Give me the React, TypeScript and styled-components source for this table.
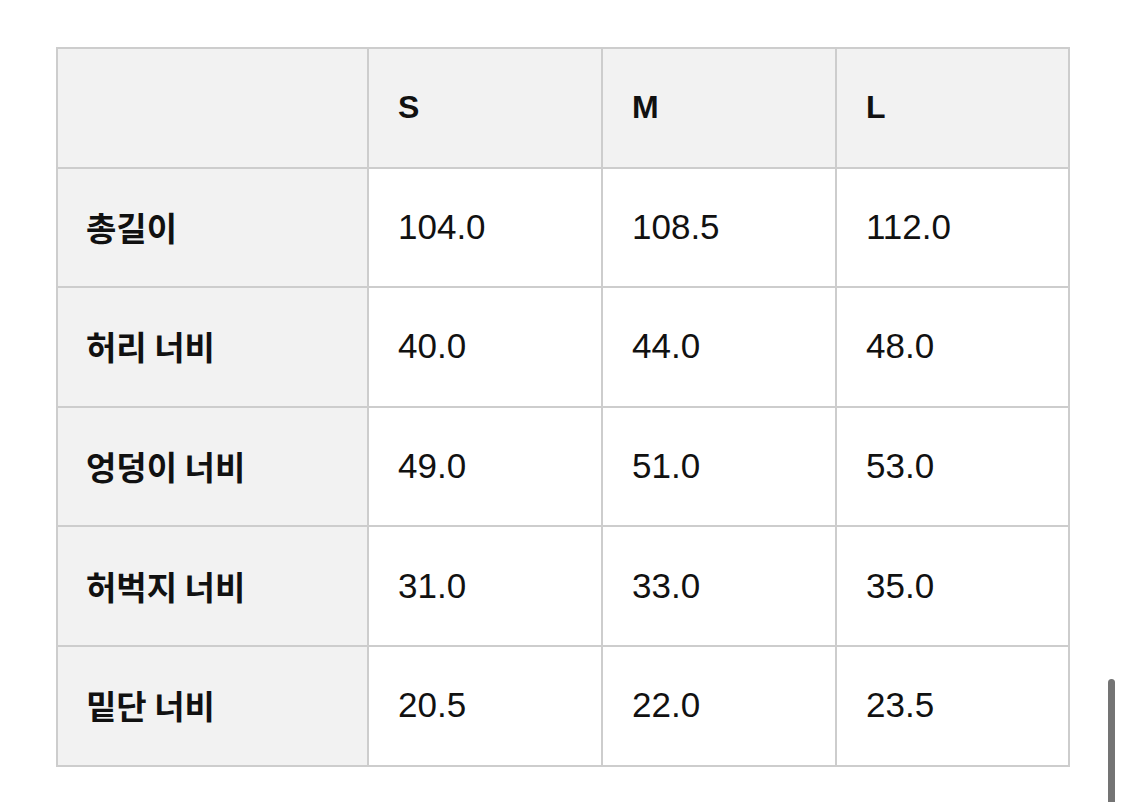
import React from "react";
import styled, { createGlobalStyle } from "styled-components";

const GlobalStyle = createGlobalStyle`
  html, body {
    margin: 0;
    padding: 0;
    background: #ffffff;
    font-family: "Liberation Sans", "Noto Sans CJK KR", sans-serif;
    color: #111111;
  }
`;

const Page = styled.div`
  width: 1125px;
  height: 802px;
  padding: 47px 0 0 56px;
  box-sizing: border-box;
  overflow: hidden;
`;

const SizeTable = styled.table`
  border-collapse: collapse;
  width: 1012px;
  table-layout: fixed;
  border: 2px solid #dadada;
`;

const HeadCell = styled.th<{ $width: number }>`
  width: ${({ $width }) => $width}px;
  height: 119.6px;
  box-sizing: border-box;
  background: #f2f2f2;
  border: 2px solid #cdcdcd;
  padding: 0 0 0 29px;
  text-align: left;
  font-size: 32px;
  font-weight: 700;
`;

const LabelCell = styled.th`
  height: 119.6px;
  box-sizing: border-box;
  background: #f2f2f2;
  border: 2px solid #cdcdcd;
  padding: 0 0 1px 28px;
  text-align: left;
  font-family: "Noto Sans CJK KR", sans-serif;
  font-size: 33px;
  font-weight: 700;
`;

const ValueCell = styled.td`
  height: 119.6px;
  box-sizing: border-box;
  background: #ffffff;
  border: 2px solid #cdcdcd;
  padding: 0 0 1px 29px;
  font-size: 35px;
  font-weight: 400;
`;

const Scrollbar = styled.div`
  position: fixed;
  left: 1108px;
  top: 679px;
  width: 7px;
  height: 140px;
  border-radius: 4px;
  background: #747474;
`;

const sizes = ["S", "M", "L"];
const widths = [311, 234, 234, 233];

const rows: { label: string; values: string[] }[] = [
  { label: "총길이", values: ["104.0", "108.5", "112.0"] },
  { label: "허리 너비", values: ["40.0", "44.0", "48.0"] },
  { label: "엉덩이 너비", values: ["49.0", "51.0", "53.0"] },
  { label: "허벅지 너비", values: ["31.0", "33.0", "35.0"] },
  { label: "밑단 너비", values: ["20.5", "22.0", "23.5"] },
];

export default function App() {
  return (
    <>
      <GlobalStyle />
      <Page>
        <SizeTable>
          <thead>
            <tr>
              <HeadCell $width={widths[0]} />
              {sizes.map((s, i) => (
                <HeadCell key={s} $width={widths[i + 1]}>
                  {s}
                </HeadCell>
              ))}
            </tr>
          </thead>
          <tbody>
            {rows.map((row) => (
              <tr key={row.label}>
                <LabelCell>{row.label}</LabelCell>
                {row.values.map((v, i) => (
                  <ValueCell key={i}>{v}</ValueCell>
                ))}
              </tr>
            ))}
          </tbody>
        </SizeTable>
      </Page>
      <Scrollbar />
    </>
  );
}
